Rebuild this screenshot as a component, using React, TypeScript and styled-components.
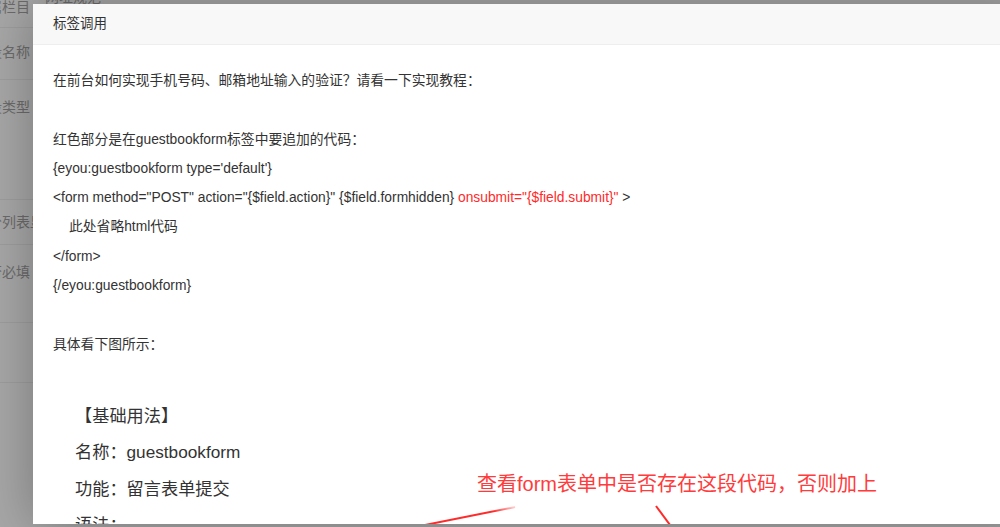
import React from 'react';
import styled, { createGlobalStyle } from 'styled-components';

const GlobalStyle = createGlobalStyle`
    html, body {
        margin: 0;
        padding: 0;
        width: 1000px;
        height: 527px;
        overflow: hidden;
        font-family: 'Liberation Sans', 'Noto Sans CJK SC', sans-serif;
    }
`;

const Screen = styled.div`
    position: relative;
    width: 1000px;
    height: 527px;
    overflow: hidden;
    background: #a7a7a7;
`;

const BackForm = styled.div`
    display: flex;
    flex-direction: column;
    margin-top: -16px;
`;

const BackRow = styled.div<{ $h: number; $pt: number }>`
    display: flex;
    align-items: flex-start;
    height: ${({ $h }) => $h}px;
    padding-top: ${({ $pt }) => $pt}px;
    box-sizing: border-box;
    border-bottom: 1px solid #9d9d9d;
`;

const BackLabel = styled.div<{ $shift?: number }>`
    flex: 0 0 200px;
    margin-left: -170px;
    text-align: right;
    white-space: nowrap;
    font-size: 14px;
    line-height: 20px;
    color: #6b6b6b;
    transform: translateX(${({ $shift }) => $shift || 0}px);
`;

const BackValue = styled.div`
    margin-left: 15px;
    margin-top: -10px;
    font-size: 14px;
    line-height: 20px;
    color: #6b6b6b;
    white-space: nowrap;
`;

const Layer = styled.div`
    position: absolute;
    left: 33px;
    top: 4px;
    width: 1000px;
    height: 520px;
    background: #fff;
    box-shadow: 1px 1px 50px rgba(0, 0, 0, 0.3);
    display: flex;
    flex-direction: column;
    overflow: hidden;
`;

const LayerTitle = styled.div`
    flex: 0 0 auto;
    height: 40px;
    line-height: 40px;
    padding: 0 80px 0 20px;
    background: #f8f8f8;
    border-bottom: 1px solid #eee;
    font-size: 13.5px;
    color: #333;
`;

const LayerBody = styled.div`
    flex: 1;
    padding: 21px 20px 0 20px;
    overflow: hidden;
`;

const Line = styled.p<{ $indent?: boolean }>`
    margin: 0;
    min-height: 29.3px;
    line-height: 29.3px;
    font-size: 13.8px;
    color: #333;
    white-space: nowrap;
    padding-left: ${({ $indent }) => ($indent ? '16px' : '0')};
`;

const Red = styled.span`
    color: #ff2a2a;
`;

const Shot = styled.div`
    position: relative;
    padding: 39px 0 0 22px;
`;

const ShotLine = styled.div`
    font-size: 17.2px;
    line-height: 36.5px;
    color: #333;
    white-space: nowrap;
`;

const Note = styled.div`
    position: absolute;
    left: 424px;
    top: 113px;
    font-size: 20px;
    line-height: 24px;
    color: #ff3b3b;
    white-space: nowrap;
`;

const Arrows = styled.svg`
    position: absolute;
    left: 0;
    top: 0;
    overflow: visible;
`;

const rows = [
    { label: '所属栏目', h: 44, pt: 13, value: '网址规范' },
    { label: '字段名称', h: 52, pt: 14 },
    { label: '字段类型', h: 120, pt: 17 },
    { label: '部分列表显示', h: 45, pt: 12, shift: 28 },
    { label: '是否必填', h: 78, pt: 17 },
    { label: '', h: 60, pt: 0 },
];

const App: React.FC = () => {
    return (
        <>
            <GlobalStyle />
            <Screen>
                <BackForm>
                    {rows.map((r, i) => (
                        <BackRow key={i} $h={r.h} $pt={r.pt}>
                            <BackLabel $shift={r.shift}>{r.label}</BackLabel>
                            {r.value && <BackValue>{r.value}</BackValue>}
                        </BackRow>
                    ))}
                </BackForm>

                <Layer>
                    <LayerTitle>标签调用</LayerTitle>
                    <LayerBody>
                        <Line>在前台如何实现手机号码、邮箱地址输入的验证？请看一下实现教程：</Line>
                        <Line />
                        <Line>红色部分是在guestbookform标签中要追加的代码：</Line>
                        <Line>{"{eyou:guestbookform type='default'}"}</Line>
                        <Line>
                            {'<form method="POST" action="{$field.action}" {$field.formhidden} '}
                            <Red>{'onsubmit="{$field.submit}"'}</Red>
                            {' >'}
                        </Line>
                        <Line $indent>此处省略html代码</Line>
                        <Line>{'</form>'}</Line>
                        <Line>{'{/eyou:guestbookform}'}</Line>
                        <Line />
                        <Line>具体看下图所示：</Line>

                        <Shot>
                            <ShotLine>【基础用法】</ShotLine>
                            <ShotLine>名称：guestbookform</ShotLine>
                            <ShotLine>功能：留言表单提交</ShotLine>
                            <ShotLine>语法：</ShotLine>
                            <Note>查看form表单中是否存在这段代码，否则加上</Note>
                            <Arrows width="700" height="200">
                                <defs>
                                    <linearGradient id="fade" x1="0" y1="1" x2="1" y2="0">
                                        <stop offset="0" stopColor="#ff2a2a" />
                                        <stop offset="0.8" stopColor="#ff2a2a" />
                                        <stop offset="1" stopColor="#ff2a2a" stopOpacity="0.2" />
                                    </linearGradient>
                                </defs>
                                <line x1="352" y1="170" x2="462" y2="148" stroke="url(#fade)" strokeWidth="2" />
                                <line x1="603" y1="147" x2="620" y2="170" stroke="#ff2a2a" strokeWidth="2" />
                            </Arrows>
                        </Shot>
                    </LayerBody>
                </Layer>
            </Screen>
        </>
    );
};

export default App;
